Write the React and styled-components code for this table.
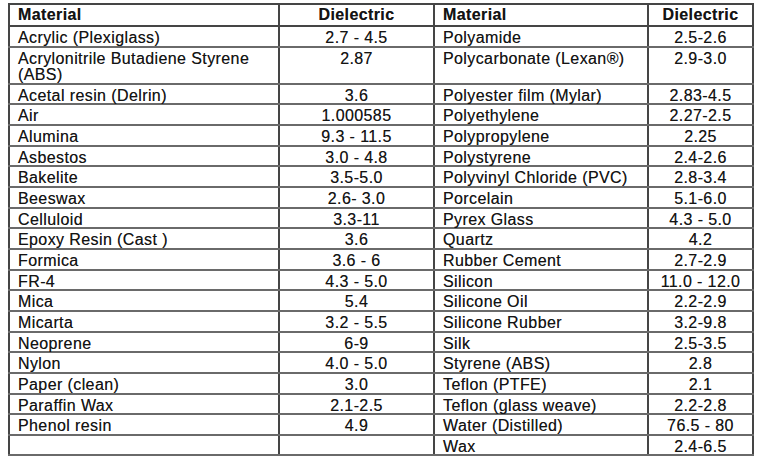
import React from 'react';
import styled,{createGlobalStyle} from 'styled-components'

const Global=createGlobalStyle`
  html,body{
    margin:0;
    padding:0;
    background:#fff;
  }
  body{
    font-family:"Liberation Sans",Arial,sans-serif;
  }
`

const Style={
  Page:styled.div`
    width:764px;
    height:462px;
    padding:3px 0 0 8px;
    box-sizing:border-box;
    background:#fff;
  `,
  Table:styled.table`
    border-collapse:collapse;
    table-layout:fixed;
    width:744px;
    color:#141414;
    font-size:16px;
    letter-spacing:0.4px;
    line-height:15.5px;
    text-shadow:0 0 0.5px rgba(0,0,0,0.5);
  `,
  Row:styled.tr`
    height:${p=>p.$h}px;
    line-height:${p=>p.$tall?'16px':'15.5px'};
  `,
  Head:styled.th`
    border:2px solid #454545;
    padding:2px 8px 0;
    vertical-align:top;
    font-weight:bold;
    text-align:${p=>p.$center?'center':'left'};
  `,
  Cell:styled.td`
    border-left:2px solid #454545;
    border-right:2px solid #454545;
    border-top:2px solid #6a6a6a;
    border-bottom:2px solid #6a6a6a;
    padding:3px 8px 0;
    vertical-align:top;
    text-align:${p=>p.$center?'center':'left'};
  `
}

const left=[
  ['Acrylic (Plexiglass)','2.7 - 4.5'],
  ['Acrylonitrile Butadiene Styrene (ABS)','2.87'],
  ['Acetal resin (Delrin)','3.6'],
  ['Air','1.000585'],
  ['Alumina','9.3 - 11.5'],
  ['Asbestos','3.0 - 4.8'],
  ['Bakelite','3.5-5.0'],
  ['Beeswax','2.6- 3.0'],
  ['Celluloid','3.3-11'],
  ['Epoxy Resin (Cast )','3.6'],
  ['Formica','3.6 - 6'],
  ['FR-4','4.3 - 5.0'],
  ['Mica','5.4'],
  ['Micarta','3.2 - 5.5'],
  ['Neoprene','6-9'],
  ['Nylon','4.0 - 5.0'],
  ['Paper (clean)','3.0'],
  ['Paraffin Wax','2.1-2.5'],
  ['Phenol resin','4.9'],
  ['',''],
]
const right=[
  ['Polyamide','2.5-2.6'],
  ['Polycarbonate (Lexan®)','2.9-3.0'],
  ['Polyester film (Mylar)','2.83-4.5'],
  ['Polyethylene','2.27-2.5'],
  ['Polypropylene','2.25'],
  ['Polystyrene','2.4-2.6'],
  ['Polyvinyl Chloride (PVC)','2.8-3.4'],
  ['Porcelain','5.1-6.0'],
  ['Pyrex Glass','4.3 - 5.0'],
  ['Quartz','4.2'],
  ['Rubber Cement','2.7-2.9'],
  ['Silicon','11.0 - 12.0'],
  ['Silicone Oil','2.2-2.9'],
  ['Silicone Rubber','3.2-9.8'],
  ['Silk','2.5-3.5'],
  ['Styrene (ABS)','2.8'],
  ['Teflon (PTFE)','2.1'],
  ['Teflon (glass weave)','2.2-2.8'],
  ['Water (Distilled)','76.5 - 80'],
  ['Wax','2.4-6.5'],
]

function App() {
  return (
    <Style.Page>
      <Global/>
      <Style.Table>
        <colgroup>
          <col style={{width:270}}/>
          <col style={{width:155}}/>
          <col style={{width:214}}/>
          <col style={{width:105}}/>
        </colgroup>
        <thead>
          <Style.Row $h={22}>
            <Style.Head>Material</Style.Head>
            <Style.Head $center>Dielectric</Style.Head>
            <Style.Head>Material</Style.Head>
            <Style.Head $center>Dielectric</Style.Head>
          </Style.Row>
        </thead>
        <tbody>
          {left.map((l,i)=>(
            <Style.Row key={i} $h={i==1?37:20.66} $tall={i==1}>
              <Style.Cell>{l[0]}</Style.Cell>
              <Style.Cell $center>{l[1]}</Style.Cell>
              <Style.Cell>{right[i][0]}</Style.Cell>
              <Style.Cell $center>{right[i][1]}</Style.Cell>
            </Style.Row>
          ))}
        </tbody>
      </Style.Table>
    </Style.Page>
  );
}

export default App;
